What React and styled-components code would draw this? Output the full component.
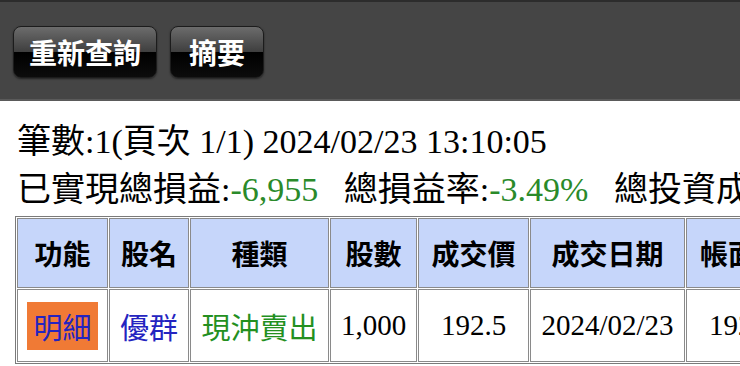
import React from "react";
import styled, { createGlobalStyle } from "styled-components";

const GlobalStyle = createGlobalStyle`
  html, body {
    margin: 0;
    padding: 0;
    background: #ffffff;
    overflow: hidden;
  }
  body {
    font-family: "Liberation Serif", "Noto Sans CJK TC", serif;
    color: #000;
  }
`;

const Page = styled.div`
  width: 740px;
  height: 366px;
  overflow: hidden;
`;

const Toolbar = styled.div`
  height: 101px;
  box-sizing: border-box;
  background: #454545;
  border-top: 2px solid #2c2c2c;
  border-bottom: 2px solid #5a5a5a;
  display: flex;
  align-items: center;
  gap: 13px;
  padding: 0 0 0 13px;
`;

const ToolButton = styled.button`
  height: 52px;
  padding: 0 ${(p) => p.$pad || 15}px;
  margin-top: 2px;
  border: 1px solid #1c1c1c;
  border-radius: 8px;
  background: linear-gradient(
    to bottom,
    #6c6c6c 0%,
    #3e3e3e 50%,
    #000000 50%,
    #0c0c0c 100%
  );
  box-shadow: 0 1px 2px rgba(0, 0, 0, 0.5);
  color: #ffffff;
  font-family: "Noto Sans CJK TC", "Noto Sans", sans-serif;
  font-size: 28px;
  font-weight: 700;
  line-height: 1;
  cursor: pointer;
`;

const Info = styled.div`
  padding: 17px 0 0 17px;
  white-space: nowrap;
`;

const InfoLine = styled.div`
  font-size: 34px;
  line-height: 48px;
`;

const Loss = styled.span`
  color: #2a8a2a;
`;

const Table = styled.table`
  margin: 2px 0 0 15px;
  width: 812px;
  table-layout: fixed;
  border: 1px solid #7a7a7a;
  border-spacing: 1px;
  background: #ffffff;
  white-space: nowrap;
`;

const HeadCell = styled.th`
  box-sizing: border-box;
  width: ${(p) => p.$w}px;
  height: 70px;
  padding: 0;
  border: 1px solid #8a8a8a;
  background: #c6d6fa;
  font-family: "Noto Sans CJK TC", "Noto Sans", sans-serif;
  font-size: 28px;
  font-weight: 700;
  text-align: center;
  vertical-align: middle;
  overflow: hidden;
`;

const Cell = styled.td`
  box-sizing: border-box;
  height: 73px;
  padding: 0;
  border: 1px solid #8a8a8a;
  text-align: center;
  vertical-align: middle;
  font-size: 29px;
  font-family: ${(p) =>
    p.$cjk
      ? `"Noto Sans CJK TC", "Noto Sans", sans-serif`
      : `"Liberation Serif", "Noto Sans CJK TC", serif`};
  color: ${(p) => p.$color || "#000"};
  overflow: hidden;
`;

const DetailTag = styled.span`
  display: inline-block;
  padding: 5px 6px;
  background: #f07a35;
  color: #2424c0;
  line-height: 38px;
`;

const columns = [
  { label: "功能", w: 91 },
  { label: "股名", w: 80 },
  { label: "種類", w: 139 },
  { label: "股數", w: 87 },
  { label: "成交價", w: 111 },
  { label: "成交日期", w: 155 },
  { label: "帳面收入", w: 140 },
];

export default function App() {
  return (
    <Page>
      <GlobalStyle />
      <Toolbar>
        <ToolButton>重新查詢</ToolButton>
        <ToolButton $pad={18}>摘要</ToolButton>
      </Toolbar>
      <Info>
        <InfoLine>筆數:1(頁次 1/1) 2024/02/23 13:10:05</InfoLine>
        <InfoLine>
          已實現總損益:<Loss>-6,955</Loss>
          {"\u00a0\u00a0\u00a0"}總損益率:<Loss>-3.49%</Loss>
          {"\u00a0\u00a0\u00a0"}總投資成本:192,500
        </InfoLine>
      </Info>
      <Table>
        <thead>
          <tr>
            {columns.map((c) => (
              <HeadCell key={c.label} $w={c.w}>
                {c.label}
              </HeadCell>
            ))}
          </tr>
        </thead>
        <tbody>
          <tr>
            <Cell $cjk>
              <DetailTag>明細</DetailTag>
            </Cell>
            <Cell $cjk $color="#2424c0">
              優群
            </Cell>
            <Cell $cjk $color="#23901f">
              現沖賣出
            </Cell>
            <Cell>1,000</Cell>
            <Cell>192.5</Cell>
            <Cell>2024/02/23</Cell>
            <Cell>192,500</Cell>
          </tr>
        </tbody>
      </Table>
    </Page>
  );
}
